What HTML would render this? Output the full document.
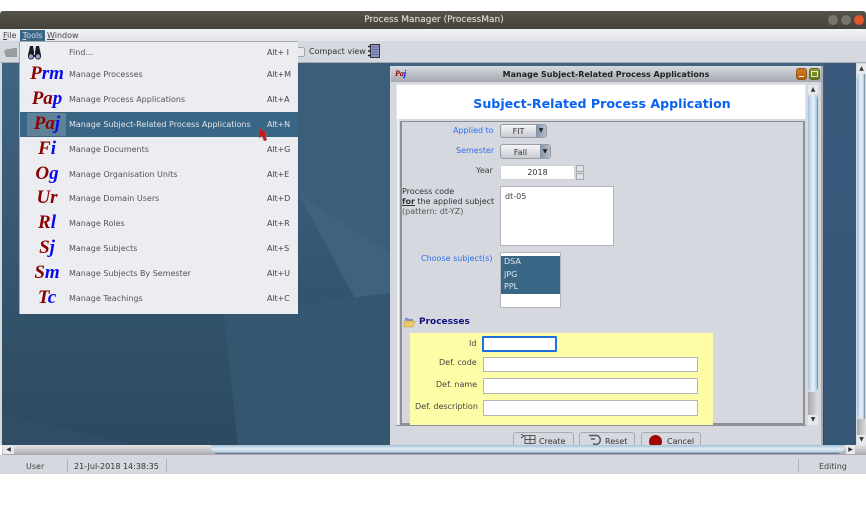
<!DOCTYPE html>
<html><head><meta charset="utf-8"><style>
html,body{margin:0;padding:0;background:#fff;}
body{width:866px;height:508px;position:relative;overflow:hidden;font-family:"DejaVu Sans",sans-serif;font-size:8px;color:#333;}
.a{position:absolute;white-space:nowrap;}
.mi{position:absolute;left:69px;color:#555;font-size:8px;white-space:nowrap;line-height:10px;}
.sc{position:absolute;left:267px;color:#444;font-size:8px;white-space:nowrap;line-height:10px;letter-spacing:-.1px;}
.ic{position:absolute;width:40px;text-align:center;font-family:"Liberation Serif",serif;font-style:italic;font-weight:bold;font-size:19px;line-height:24px;color:#8b0000;white-space:nowrap;}
.ic b{color:#0a0af0;font-weight:bold;}
.lb{position:absolute;white-space:nowrap;line-height:10px;font-size:8px;text-align:right;}
.bl{color:#2f6fe8;}
.in{position:absolute;background:#fff;box-sizing:border-box;border:1px solid #b5b5bb;}
.sb{position:absolute;background:linear-gradient(90deg,#9fbfd8,#cfe2f1 30%,#e6f0f8 55%,#b4cfe4 85%,#587690);}
.btn{position:absolute;top:432px;height:14px;background:#d6d8e0;border:1px solid #a9abb3;border-bottom:0;border-radius:3px 3px 0 0;box-sizing:border-box;font-size:8px;line-height:18px;color:#333;}
</style></head><body>
<!-- title bar -->
<div class="a" style="left:0;top:11px;width:866px;height:18px;background:linear-gradient(#55524b,#45433c);border-radius:3px 3px 0 0"></div>
<div class="a" style="left:1px;top:15px;width:866px;text-align:center;color:#dedbd3;font-size:9px;line-height:11px;-webkit-text-stroke:.15px #dedbd3">Process Manager (ProcessMan)</div>
<div class="a" style="left:828px;top:15px;width:10px;height:10px;border-radius:50%;background:#77756e"></div>
<div class="a" style="left:841px;top:15px;width:10px;height:10px;border-radius:50%;background:#77756e"></div>
<div class="a" style="left:854px;top:15px;width:10px;height:10px;border-radius:50%;background:#e0562a"></div>
<!-- menu & toolbar -->
<div class="a" style="left:0;top:29px;width:866px;height:12px;background:linear-gradient(#f2f3f5,#e2e4e9)"></div>
<div class="a" style="left:0;top:41px;width:866px;height:21px;background:#d6d8e0;border-bottom:1px solid #a9abb3"></div>
<div class="a" style="left:3px;top:30px;line-height:11px;font-size:8px;color:#444"><u>F</u>ile</div>
<div class="a" style="left:20px;top:30px;width:25px;height:11px;background:#3a6686;color:#d8dfe6;line-height:11px;text-align:center"><u>T</u>ools</div>
<div class="a" style="left:47px;top:30px;line-height:11px;color:#444"><u>W</u>indow</div>
<svg class="a" style="left:3px;top:47px" width="15" height="11" viewBox="0 0 15 11"><path d="M1 4l3-2h4l1-1h5v9H3z" fill="#9a9b9e"/></svg>
<!-- desktop -->
<div class="a" style="left:2px;top:63px;width:862px;height:382px;background:#3a5b77;overflow:hidden">
<svg width="862" height="382" style="position:absolute;left:0;top:0">
<defs><linearGradient id="g" x1="0" y1="0" x2="0" y2="1"><stop offset="0" stop-color="#3f6582"/><stop offset="1" stop-color="#2c495f"/></linearGradient></defs>
<rect width="862" height="382" fill="url(#g)"/>
<polygon points="296,0 296,130 388,300 388,0" fill="#3b5e7a"/>
<polygon points="296,130 388,300 388,190" fill="#3f627e"/>
<polygon points="222,252 236,382 388,382 388,230" fill="#35566f"/>
<polygon points="0,350 0,382 130,382" fill="#2f4e66"/>
<polygon points="822,0 862,0 862,382 822,382" fill="#37587a" opacity=".9"/>
</svg></div>
<div class="a" style="left:0;top:63px;width:2px;height:382px;background:#d6d8e0"></div>
<!-- main scrollbars -->
<div class="a" style="left:856px;top:63px;width:10px;height:382px;background:#d6d8e0"></div>
<div class="a" style="left:857px;top:64px;width:9px;height:10px;background:#e8e9ec;color:#333;font-size:6px;line-height:10px;text-align:center">▲</div>
<div class="sb" style="left:857px;top:74px;width:8px;height:345px;border-radius:5px 0 0 6px"></div>
<div class="a" style="left:857px;top:419px;width:9px;height:16px;background:linear-gradient(90deg,#a8a8ac,#dedee0)"></div>
<div class="a" style="left:857px;top:435px;width:9px;height:10px;background:#e8e9ec;color:#333;font-size:6px;line-height:10px;text-align:center">▼</div>
<div class="a" style="left:2px;top:445px;width:864px;height:10px;background:linear-gradient(#e4e4e6,#b0b0b4);border-bottom:1px solid #a9abb3;box-sizing:border-box"></div>
<div class="a" style="left:3px;top:446px;width:11px;height:8px;background:#e8e9ec;color:#333;font-size:6px;line-height:8px;text-align:center">◀</div>
<!-- status -->
<div class="a" style="left:0;top:455px;width:866px;height:19px;background:#d6d8e0"></div>
<div class="a" style="left:26px;top:461px;color:#444;line-height:11px">User</div>
<div class="a" style="left:67px;top:459px;width:1px;height:13px;background:#b0b2b9"></div>
<div class="a" style="left:74px;top:461px;color:#333;line-height:11px">21-Jul-2018 14:38:35</div>
<div class="a" style="left:166px;top:459px;width:1px;height:13px;background:#b0b2b9"></div>
<div class="a" style="left:798px;top:459px;width:1px;height:13px;background:#b0b2b9"></div>
<div class="a" style="left:819px;top:461px;color:#444;line-height:11px">Editing</div>
<!-- internal frame -->
<div class="a" style="left:390px;top:66px;width:433px;height:379px;background:#d6d8e0;border-right:2px solid #a9abb3;box-sizing:border-box"></div>
<div class="a" style="left:391px;top:66px;width:430px;height:16px;background:linear-gradient(#d8dae1,#a5a7af)"></div>
<div class="a" style="left:395px;top:68px;font:italic bold 8px 'Liberation Serif',serif;color:#8b0000;line-height:11px">Pa<span style="color:#00f">j</span></div>
<div class="a" style="left:398px;top:69px;width:416px;text-align:center;font-size:8px;font-weight:bold;color:#222;line-height:11px">Manage Subject-Related Process Applications</div>
<div class="a" style="left:796px;top:68px;width:11px;height:12px;border-radius:3px;background:linear-gradient(#d47a20,#b06010);border:1px solid #8a5a20;box-sizing:border-box"></div>
<div class="a" style="left:799px;top:76px;width:5px;height:1px;background:#fff"></div>
<div class="a" style="left:809px;top:68px;width:11px;height:12px;border-radius:3px;background:linear-gradient(#8a9a30,#657a18);border:1px solid #5a6a20;box-sizing:border-box"></div>
<div class="a" style="left:811px;top:71px;width:7px;height:6px;border:1px solid #e5e8c0;box-sizing:border-box"></div>
<!-- heading -->
<div class="a" style="left:397px;top:85px;width:408px;height:34px;background:#fff;border-bottom:2px solid #909196;outline:1px solid #e3e3e6"></div>
<div class="a" style="left:398px;top:96px;width:408px;text-align:center;color:#0a62f0;font-size:12.6px;font-weight:bold;line-height:16px">Subject-Related Process Application</div>
<!-- frame scrollbar -->
<div class="a" style="left:807px;top:85px;width:11px;height:339px;background:#d6d8e0"></div>
<div class="a" style="left:808px;top:85px;width:10px;height:9px;background:#e8e9ec;color:#333;font-size:6px;line-height:9px;text-align:center">▲</div>
<div class="sb" style="left:808px;top:94px;width:10px;height:298px;border-radius:6px 6px 6px 6px"></div>
<div class="a" style="left:808px;top:392px;width:10px;height:23px;background:linear-gradient(90deg,#a8a8ac,#dedee0)"></div>
<div class="a" style="left:808px;top:415px;width:10px;height:10px;background:#e8e9ec;color:#333;font-size:6px;line-height:10px;text-align:center">▼</div>
<!-- form panel -->
<div class="a" style="left:397px;top:119px;width:409px;height:306px;background:#d6d8e0;border-left:2px solid #eee;box-sizing:border-box"></div>
<div class="a" style="left:400px;top:121px;width:405px;height:304px;border:2px solid #8f9096;border-top:1px solid #8f9096;box-sizing:border-box;background:#d6d8e0"></div>
<div class="a" style="left:396px;top:425px;width:410px;height:1px;background:#8f9096"></div>
<div class="lb bl" style="left:453px;top:126px">Applied to</div>
<div class="a" style="left:500px;top:124px;width:47px;height:14px;border:1px solid #9a9ca3;border-radius:3px;background:linear-gradient(#f4f5f7,#c8cad2);box-sizing:border-box;text-align:center;line-height:14px;padding-right:10px;color:#333;font-size:8px">FIT</div>
<div class="a" style="left:536px;top:125px;width:10px;height:12px;background:linear-gradient(90deg,#7f93a8,#b6bec9);color:#222;font-size:6px;line-height:12px;text-align:center">▼</div>
<div class="lb bl" style="left:456px;top:146px">Semester</div>
<div class="a" style="left:500px;top:144px;width:51px;height:15px;border:1px solid #9a9ca3;border-radius:3px;background:linear-gradient(#f4f5f7,#c8cad2);box-sizing:border-box;text-align:center;line-height:15px;padding-right:10px;color:#333;font-size:8px">Fall</div>
<div class="a" style="left:540px;top:145px;width:10px;height:13px;background:linear-gradient(90deg,#7f93a8,#b6bec9);color:#222;font-size:6px;line-height:13px;text-align:center">▼</div>
<div class="lb" style="left:476px;top:166px;color:#444">Year</div>
<div class="in" style="left:500px;top:165px;width:75px;height:15px;text-align:center;line-height:14px;color:#333;border-color:#d0d0d6">2018</div>
<div class="a" style="left:576px;top:165px;width:8px;height:7px;background:#e0e1e5;border:1px solid #a5a7ad;box-sizing:border-box"></div>
<div class="a" style="left:576px;top:173px;width:8px;height:7px;background:#e0e1e5;border:1px solid #a5a7ad;box-sizing:border-box"></div>
<div class="lb" style="left:402px;top:187px;color:#333;line-height:10px;text-align:left">Process code<br><b><u>for</u></b> the applied subject<br><span style="color:#555">(pattern: dt-YZ)</span></div>
<div class="in" style="left:500px;top:186px;width:114px;height:60px;padding:5px 4px;color:#444;line-height:10px">dt-05</div>
<div class="lb bl" style="left:421px;top:254px">Choose subject(s)</div>
<div class="in" style="left:500px;top:252px;width:61px;height:56px"></div>
<div class="a" style="left:501px;top:256px;width:59px;height:38px;background:#3a6686;color:#dfe5ea;line-height:12.7px;padding-left:3px;box-sizing:border-box">DSA<br>JPG<br>PPL</div>
<svg class="a" style="left:403px;top:316px" width="13" height="12" viewBox="0 0 13 12"><path d="M2 2h3l1 1h4v2H2z" fill="#7a93c8"/><path d="M1 5h11l-2 6H1z" fill="#eec868" stroke="#b89a4a" stroke-width=".5"/></svg>
<div class="a" style="left:419px;top:317px;color:#101080;font-weight:bold;font-size:9px;line-height:11px">Processes</div>
<!-- yellow -->
<div class="a" style="left:410px;top:333px;width:303px;height:92px;background:#fdfda8"></div>
<div class="lb" style="left:469px;top:339px;color:#444">Id</div>
<div class="a" style="left:482px;top:336px;width:75px;height:16px;background:#fff;border:2px solid #1f6fe0;box-sizing:border-box;border-radius:1px"></div>
<div class="lb" style="left:439px;top:358px;color:#444">Def. code</div>
<div class="in" style="left:483px;top:357px;width:215px;height:15px"></div>
<div class="lb" style="left:436px;top:380px;color:#444">Def. name</div>
<div class="in" style="left:483px;top:378px;width:215px;height:16px"></div>
<div class="lb" style="left:415px;top:402px;color:#444">Def. description</div>
<div class="in" style="left:483px;top:400px;width:215px;height:16px"></div>
<!-- buttons -->
<div class="btn" style="left:513px;width:61px;padding-left:25px">Create</div>
<svg class="a" style="left:520px;top:434px" width="16" height="11" viewBox="0 0 16 11"><path d="M5 1.500h10v8H5zM5 5.500h10M10 1.500v8" fill="none" stroke="#333" stroke-width=".8"/><path d="M1 0l3 2-3 2" fill="none" stroke="#333" stroke-width=".8"/></svg>
<div class="btn" style="left:579px;width:56px;padding-left:25px">Reset</div>
<svg class="a" style="left:588px;top:434px" width="13" height="11" viewBox="0 0 13 11"><path d="M1 1.500h6a4.500 4.500 0 1 1-2 8M3 5h4" fill="none" stroke="#556" stroke-width="1.500"/></svg>
<div class="btn" style="left:641px;width:60px;padding-left:25px">Cancel</div>
<div class="a" style="left:649px;top:435px;width:13px;height:13px;border-radius:50%;background:#a00808"></div>
<div class="a" style="left:211px;top:445px;width:633px;height:9px;background:linear-gradient(#9fbfd8,#dfeaf4 40%,#c0d7e9 75%,#4d6275);border-radius:0 0 7px 7px"></div>
<div class="a" style="left:846px;top:445px;width:9px;height:9px;background:#e8e9ec;color:#333;font-size:6px;line-height:9px;text-align:center">▶</div>
<!-- menu popup -->
<div class="a" style="left:19px;top:41px;width:279px;height:273px;background:#ecedf1;border:1px solid #a9abb3;border-bottom:0;border-right:0;box-sizing:border-box"></div>
<svg class="a" style="left:27px;top:46px" width="15" height="14" viewBox="0 0 15 14"><path d="M3 0h3l1 6v3h1V6l1-6h3l2 9v1a3 3 0 1 1-6 1H7a3 3 0 1 1-6-1V9z" fill="#1a1a22"/><circle cx="4" cy="10.500" r="2.200" fill="#9a9cd0"/><circle cx="11" cy="10.500" r="2.200" fill="#9a9cd0"/></svg>
<div class="mi" style="top:48px">Find...</div><div class="sc" style="top:48px">Alt+ I</div>
<div class="ic" style="left:27px;top:62px">P<b>rm</b></div>
<div class="mi" style="top:70px">Manage Processes</div><div class="sc" style="top:70px">Alt+M</div>
<div class="ic" style="left:27px;top:87px">Pa<b>p</b></div>
<div class="mi" style="top:95px">Manage Process Applications</div><div class="sc" style="top:95px">Alt+A</div>
<div class="a" style="left:20px;top:112px;width:278px;height:25px;background:#3a6686"></div>
<div class="a" style="left:27px;top:113px;width:39px;height:23px;background:#5f8299"></div>
<div class="ic" style="left:27px;top:112px">Pa<b>j</b></div>
<div class="mi" style="top:120px;color:#dfe5ea">Manage Subject-Related Process Applications</div><div class="sc" style="top:120px;color:#dfe5ea">Alt+N</div>
<svg class="a" style="left:257px;top:126px" width="14" height="18" viewBox="0 0 14 18"><path d="M2 1v11l3-2 2 5 3-1-2-5h3z" fill="#c41a1a" stroke="#8a7a7a" stroke-width=".4"/></svg>
<div class="ic" style="left:27px;top:137px">F<b>i</b></div>
<div class="mi" style="top:145px">Manage Documents</div><div class="sc" style="top:145px">Alt+G</div>
<div class="ic" style="left:27px;top:162px">O<b>g</b></div>
<div class="mi" style="top:170px">Manage Organisation Units</div><div class="sc" style="top:170px">Alt+E</div>
<div class="ic" style="left:27px;top:186px">Ur</div>
<div class="mi" style="top:194px">Manage Domain Users</div><div class="sc" style="top:194px">Alt+D</div>
<div class="ic" style="left:27px;top:211px">R<b>l</b></div>
<div class="mi" style="top:219px">Manage Roles</div><div class="sc" style="top:219px">Alt+R</div>
<div class="ic" style="left:27px;top:236px">S<b>j</b></div>
<div class="mi" style="top:244px">Manage Subjects</div><div class="sc" style="top:244px">Alt+S</div>
<div class="ic" style="left:27px;top:261px">S<b>m</b></div>
<div class="mi" style="top:269px">Manage Subjects By Semester</div><div class="sc" style="top:269px">Alt+U</div>
<div class="ic" style="left:27px;top:286px">T<b>c</b></div>
<div class="mi" style="top:294px">Manage Teachings</div><div class="sc" style="top:294px">Alt+C</div>
<!-- compact view -->
<div class="a" style="left:298px;top:47px;width:7px;height:10px;background:#e8e9ec;border:1px solid #a5a7ad;border-left:0;box-sizing:border-box;border-radius:0 2px 2px 0"></div>
<div class="a" style="left:309px;top:47px;line-height:10px;color:#333">Compact view</div>
<svg class="a" style="left:368px;top:44px" width="13" height="15" viewBox="0 0 13 15"><rect x="2.500" y=".5" width="9" height="13" fill="#8f92c8" stroke="#333"/><path d="M4 3h6M4 5.500h6M4 8h6M4 10.500h6" stroke="#5a5c90" stroke-width=".8"/><path d="M0 2.500h3M0 7h3M0 11.500h3" stroke="#222" stroke-width="1.500"/></svg>
</body></html>
